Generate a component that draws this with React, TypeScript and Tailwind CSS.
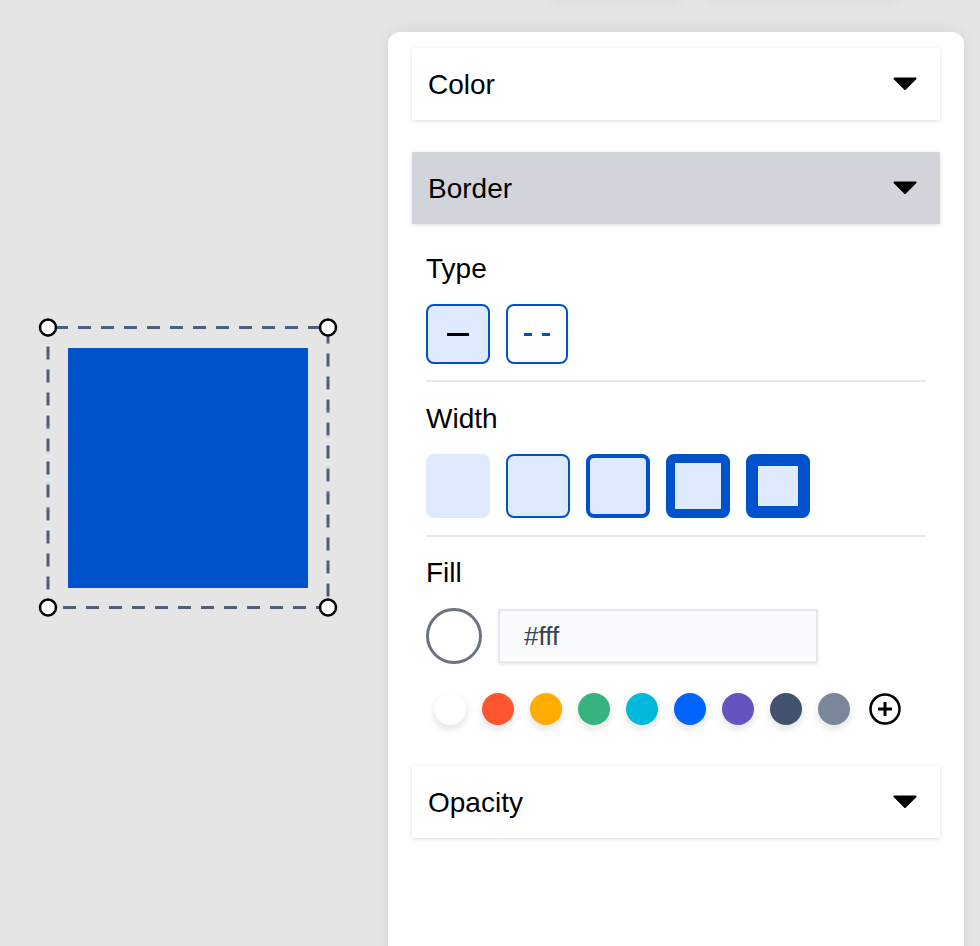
import React from "react";

const font = { fontFamily: '"Liberation Sans", Arial, Helvetica, sans-serif' };

function Caret() {
  return (
    <svg width="26" height="14" viewBox="0 0 26 14" className="block">
      <path d="M2.5 1.5 H23.5 L13 12 Z" fill="#000" stroke="#000" strokeWidth="2" strokeLinejoin="round" />
    </svg>
  );
}

function Header({ title, active }: { title: string; active?: boolean }) {
  return (
    <div
      className={`flex h-[72px] items-center justify-between pl-4 pr-[22px] shadow-[0_1px_4px_rgba(0,0,0,0.14)] ${
        active ? "bg-[#d1d5db]" : "bg-white"
      }`}
    >
      <span className="pt-[1px] text-[28px] leading-8 text-black">{title}</span>
      <Caret />
    </div>
  );
}

const swatches = ["#ffffff", "#ff5630", "#ffab00", "#36b37e", "#00b8d9", "#0065ff", "#6554c0", "#42526e", "#7a869a"];

export default function App() {
  return (
    <div className="relative flex h-[946px] w-[980px] overflow-hidden bg-[#e5e5e5]" style={font}>
      {/* faint shadows of elements above viewport */}
      <div className="absolute left-[552px] top-[-60px] h-[60px] w-[128px] bg-[#e5e5e5] shadow-[0_3px_12px_rgba(0,0,0,0.04)]" />
      <div className="absolute left-[708px] top-[-60px] h-[60px] w-[190px] bg-[#e5e5e5] shadow-[0_3px_12px_rgba(0,0,0,0.04)]" />

      {/* canvas */}
      <div className="w-[388px] shrink-0">
        <svg width="388" height="946" className="block">
          <rect x="68" y="348" width="240" height="240" fill="#0052cc" />
          <rect
            x="48"
            y="327.5"
            width="280"
            height="280"
            fill="none"
            stroke="#4f5d78"
            strokeWidth="3"
            strokeDasharray="13 10"
            strokeDashoffset="-7"
          />
          {[
            [48, 327.5],
            [328, 327.5],
            [48, 607.5],
            [328, 607.5],
          ].map(([cx, cy], i) => (
            <circle key={i} cx={cx} cy={cy} r="8" fill="#fff" stroke="#000" strokeWidth="2.5" />
          ))}
        </svg>
      </div>

      {/* panel */}
      <div className="mt-8 h-[940px] w-[576px] shrink-0 rounded-t-xl bg-white px-6 pt-4 shadow-[0_0_14px_rgba(0,0,0,0.08)]">
        <Header title="Color" />
        <div className="mt-8">
          <Header title="Border" active />
        </div>

        <div className="px-[14px] pt-[29px]">
          {/* Type */}
          <div className="text-[28px] leading-8 text-black">Type</div>
          <div className="mt-[19px] flex gap-4">
            <div className="flex h-[60px] w-[64px] items-center justify-center rounded-lg border-2 border-[#0052cc] bg-[#deebff]">
              <div className="h-[3px] w-[22px] bg-black" />
            </div>
            <div className="flex h-[60px] w-[62px] items-center justify-center gap-[10px] rounded-lg border-2 border-[#0052cc] bg-white">
              <div className="h-[3px] w-[8px] bg-[#0052cc]" />
              <div className="h-[3px] w-[8px] bg-[#0052cc]" />
            </div>
          </div>
          <div className="mt-4 h-[2px] bg-[#e4e7eb]" />

          {/* Width */}
          <div className="mt-[21px] text-[28px] leading-8 text-black">Width</div>
          <div className="mt-[19px] flex gap-4">
            <div className="h-16 w-16 rounded-lg bg-[#deebff]" />
            <div className="h-16 w-16 rounded-lg border-2 border-[#0052cc] bg-[#deebff]" />
            <div className="h-16 w-16 rounded-lg border-4 border-[#0052cc] bg-[#deebff]" />
            <div className="h-16 w-16 rounded-lg border-[9px] border-[#0052cc] bg-[#deebff]" />
            <div className="h-16 w-16 rounded-lg border-[12px] border-[#0052cc] bg-[#deebff]" />
          </div>
          <div className="mt-[17px] h-[2px] bg-[#e4e7eb]" />

          {/* Fill */}
          <div className="mt-5 text-[28px] leading-8 text-black">Fill</div>
          <div className="mt-[19px] flex items-center gap-4">
            <div className="h-14 w-14 rounded-full border-[3px] border-[#6b7280] bg-white" />
            <div className="flex h-[54px] w-[320px] items-center border-2 border-[#e6e8ec] bg-[#fafbfc] pl-[24px] text-[26px] text-[#374151] shadow-[0_2px_3px_rgba(0,0,0,0.08)]">
              #fff
            </div>
          </div>
          <div className="mt-7 flex items-center gap-4 pl-2">
            {swatches.map((c) => (
              <div
                key={c}
                className="h-8 w-8 rounded-full shadow-[0_4px_8px_rgba(0,0,0,0.12)]"
                style={{ backgroundColor: c }}
              />
            ))}
            <svg width="34" height="34" viewBox="0 0 34 34" className="ml-[2px] block">
              <circle cx="17" cy="17" r="14.5" fill="none" stroke="#000" strokeWidth="2.5" />
              <path d="M17 10 V24 M10 17 H24" stroke="#000" strokeWidth="3" />
            </svg>
          </div>
        </div>

        <div className="mt-[40px]">
          <Header title="Opacity" />
        </div>
      </div>
    </div>
  );
}
